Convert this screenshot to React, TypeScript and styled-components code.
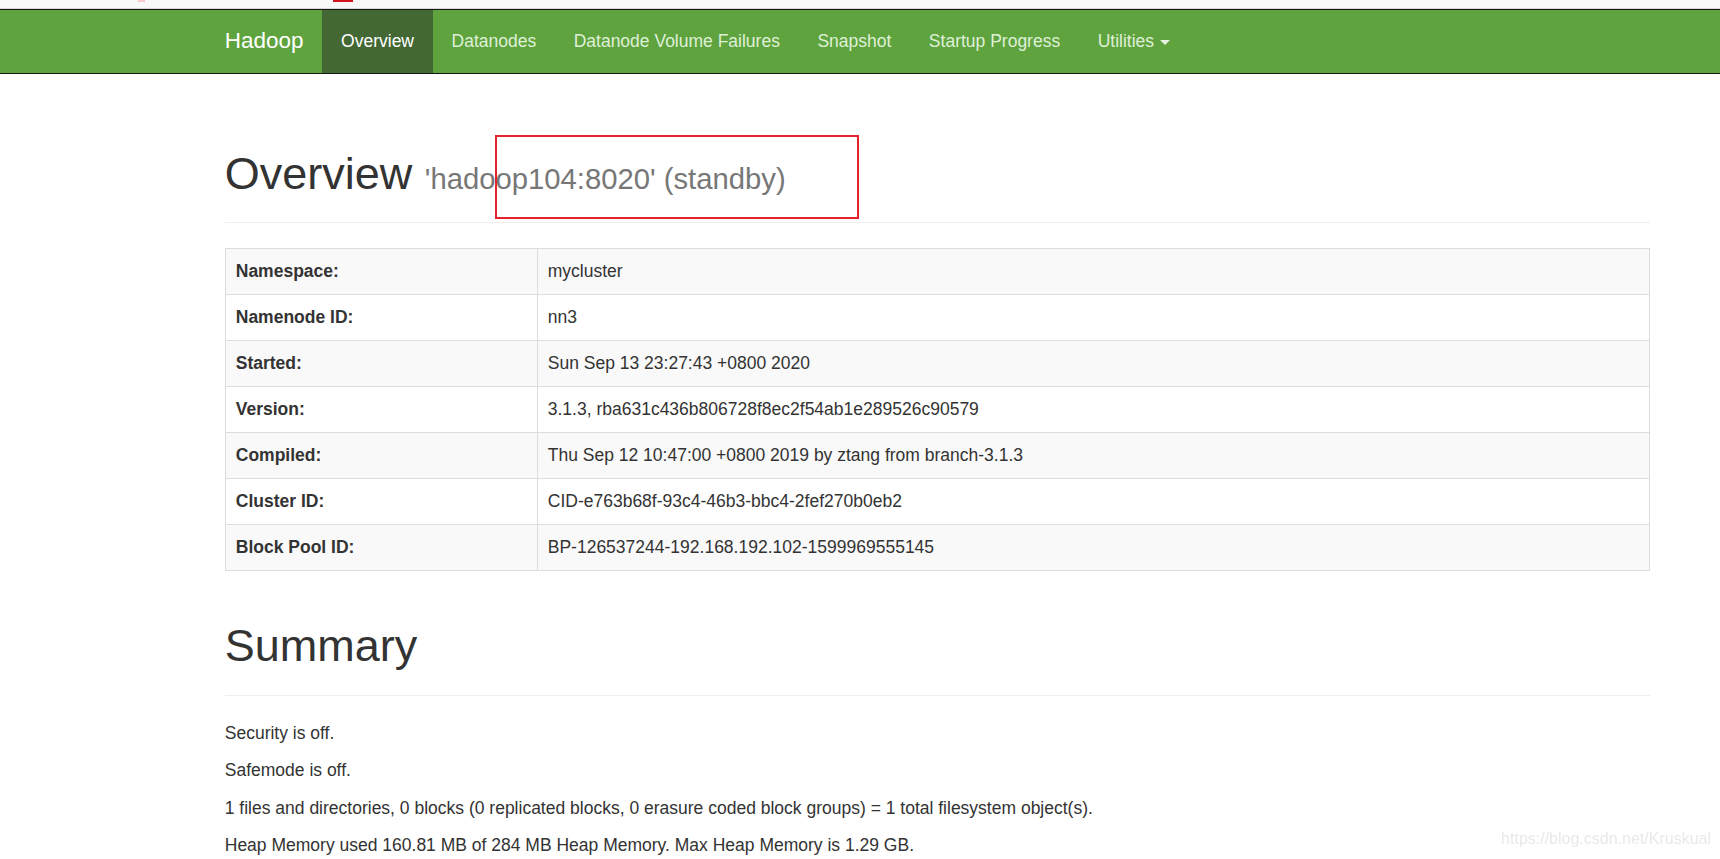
import React from "react";
import styled, { createGlobalStyle } from "styled-components";

const GlobalStyle = createGlobalStyle`
  html, body {
    margin: 0;
    padding: 0;
    background: #fff;
  }
  body {
    font-family: "Liberation Sans", Arial, sans-serif;
    font-size: 17.5px;
    line-height: 1.42857;
    color: #333;
  }
  * { box-sizing: border-box; }
`;

const TopStrip = styled.div`
  position: relative;
  height: 9px;
  background: #f8f8f8;
  border-bottom: 1px solid #d6d6d6;
`;

const StripMark = styled.span<{ $left: number; $width: number; $color: string }>`
  position: absolute;
  top: 0;
  left: ${({ $left }) => $left}px;
  width: ${({ $width }) => $width}px;
  height: 2px;
  background: ${({ $color }) => $color};
`;

const Navbar = styled.nav`
  background: #5fa33e;
  border-top: 1px solid #161616;
  border-bottom: 1px solid #161616;
  height: 65px;
`;

const NavInner = styled.div`
  display: flex;
  align-items: stretch;
  height: 63px;
  margin-left: 206px;
`;

const Brand = styled.a`
  display: flex;
  align-items: center;
  padding: 0 18.75px;
  font-size: 22.5px;
  color: #fff;
  text-decoration: none;
`;

const NavLink = styled.a<{ $active?: boolean }>`
  display: flex;
  align-items: center;
  padding: 0 18.75px;
  font-size: 17.5px;
  color: ${({ $active }) => ($active ? "#fff" : "#dff0d8")};
  background: ${({ $active }) => ($active ? "#436834" : "transparent")};
  text-decoration: none;
`;

const Caret = styled.span`
  display: inline-block;
  width: 0;
  height: 0;
  margin-left: 6px;
  margin-top: 2px;
  border-top: 5px solid #e8f2e0;
  border-left: 5px solid transparent;
  border-right: 5px solid transparent;
`;

const Container = styled.main`
  margin-left: 206px;
  width: 1463px;
  padding: 25px 18.75px 0;
`;

const PageHeader = styled.div`
  position: relative;
  margin: 50px 0 25px;
  padding-bottom: 11.25px;
  border-bottom: 1px solid #eee;
`;

const Title = styled.h1`
  margin: 0 0 12.5px;
  font-size: 45px;
  font-weight: 500;
  line-height: 1.1;
  color: #333;
`;

const Sub = styled.small`
  font-size: 29.25px;
  font-weight: 400;
  color: #777;
`;

const Annotation = styled.div`
  position: absolute;
  left: 270px;
  top: -14px;
  width: 364px;
  height: 84px;
  border: 2px solid #e5232b;
`;

const Table = styled.table`
  width: 100%;
  border-collapse: collapse;
  border: 1px solid #ddd;
  margin-bottom: 25px;
`;

const Row = styled.tr`
  &:nth-child(odd) {
    background: #f9f9f9;
  }
`;

const Th = styled.th`
  width: 312px;
  padding: 10px;
  text-align: left;
  font-weight: 700;
  line-height: 25px;
  border: 1px solid #ddd;
`;

const Td = styled.td`
  padding: 10px;
  line-height: 25px;
  border: 1px solid #ddd;
`;

const Para = styled.p`
  margin: 0 0 12.5px;
  line-height: 25px;
`;

const Watermark = styled.div`
  position: fixed;
  right: 9px;
  bottom: 8px;
  font-size: 16px;
  color: #e9e9e9;
  font-family: "Liberation Sans", Arial, sans-serif;
`;

const info: [string, string][] = [
  ["Namespace:", "mycluster"],
  ["Namenode ID:", "nn3"],
  ["Started:", "Sun Sep 13 23:27:43 +0800 2020"],
  ["Version:", "3.1.3, rba631c436b806728f8ec2f54ab1e289526c90579"],
  ["Compiled:", "Thu Sep 12 10:47:00 +0800 2019 by ztang from branch-3.1.3"],
  ["Cluster ID:", "CID-e763b68f-93c4-46b3-bbc4-2fef270b0eb2"],
  ["Block Pool ID:", "BP-126537244-192.168.192.102-1599969555145"],
];

const summary = [
  "Security is off.",
  "Safemode is off.",
  "1 files and directories, 0 blocks (0 replicated blocks, 0 erasure coded block groups) = 1 total filesystem object(s).",
  "Heap Memory used 160.81 MB of 284 MB Heap Memory. Max Heap Memory is 1.29 GB.",
];

const links = [
  "Datanodes",
  "Datanode Volume Failures",
  "Snapshot",
  "Startup Progress",
];

export default function App() {
  return (
    <>
      <GlobalStyle />
      <TopStrip>
        <StripMark $left={138} $width={7} $color="#f7c9cc" />
        <StripMark $left={333} $width={20} $color="#d4141c" />
      </TopStrip>
      <Navbar>
        <NavInner>
          <Brand href="#">Hadoop</Brand>
          <NavLink href="#" $active>
            Overview
          </NavLink>
          {links.map((l) => (
            <NavLink key={l} href="#">
              {l}
            </NavLink>
          ))}
          <NavLink href="#">
            Utilities
            <Caret />
          </NavLink>
        </NavInner>
      </Navbar>

      <Container>
        <PageHeader>
          <Title>
            Overview <Sub>'hadoop104:8020' (standby)</Sub>
          </Title>
          <Annotation />
        </PageHeader>

        <Table>
          <tbody>
            {info.map(([k, v]) => (
              <Row key={k}>
                <Th>{k}</Th>
                <Td>{v}</Td>
              </Row>
            ))}
          </tbody>
        </Table>

        <PageHeader>
          <Title>Summary</Title>
        </PageHeader>

        {summary.map((s) => (
          <Para key={s}>{s}</Para>
        ))}
      </Container>
      <Watermark>https://blog.csdn.net/Kruskual</Watermark>
    </>
  );
}
